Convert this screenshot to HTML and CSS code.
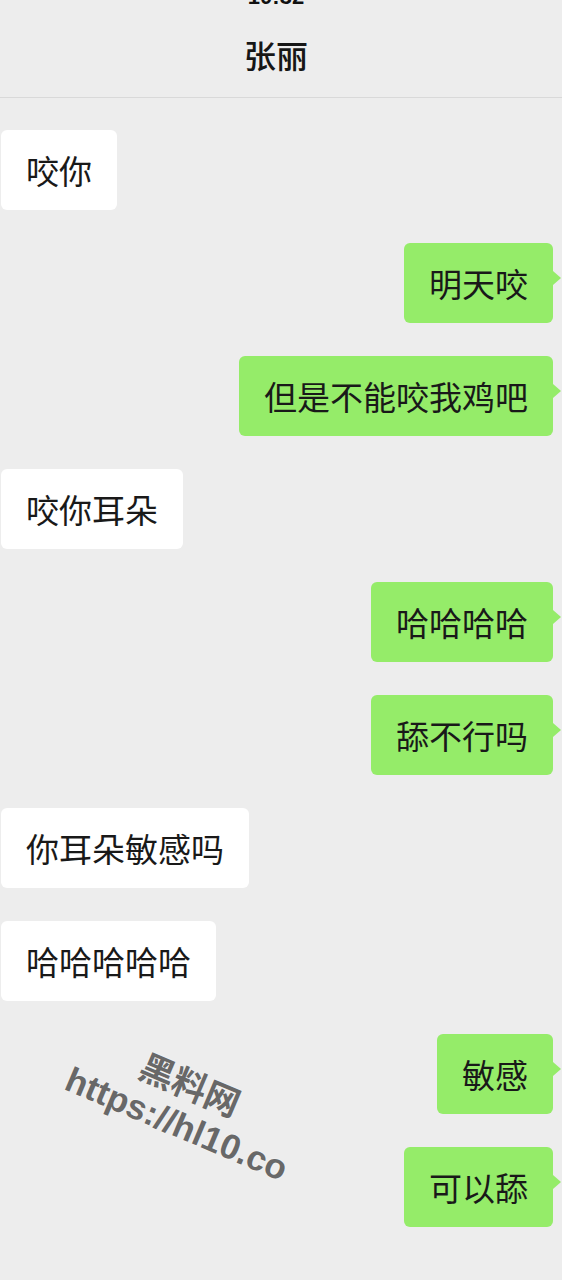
FILE: index.html
```html
<!DOCTYPE html>
<html lang="zh-CN">
<head>
  <meta charset="UTF-8" />
  <meta name="viewport" content="width=device-width, initial-scale=1.0"/>
  <title>张丽</title>
  <link rel="stylesheet" href="styles.css">
</head>
<body>

<div class="topbar">
  <div class="clock">10:32</div>
  <div class="title">张丽</div>
</div>

<div class="chat">
  <div class="msg"><div class="bubble">咬你</div></div>
  <div class="msg me"><div class="bubble">明天咬</div></div>
  <div class="msg me"><div class="bubble">但是不能咬我鸡吧</div></div>
  <div class="msg"><div class="bubble">咬你耳朵</div></div>
  <div class="msg me"><div class="bubble">哈哈哈哈</div></div>
  <div class="msg me"><div class="bubble">舔不行吗</div></div>
  <div class="msg"><div class="bubble">你耳朵敏感吗</div></div>
  <div class="msg"><div class="bubble">哈哈哈哈哈</div></div>
  <div class="msg me"><div class="bubble">敏感</div></div>
  <div class="msg me"><div class="bubble">可以舔</div></div>
</div>

<div class="mark mark-name">黑料网</div>
<div class="mark mark-url">https://hl10.co</div>

</body>
</html>
```

FILE: styles.css
```css
body {
  margin: 0;
  background-color: #ededed;
  font-family: "Noto Sans CJK SC", "Noto Sans", sans-serif;
  color: #191919;
}

.topbar {
  height: 97px;
  padding-right: 10px;
  border-bottom: 1px solid #d9d9d9;
  overflow: hidden;
  text-align: center;
}

.clock {
  height: 22px;
  margin-top: -14px;
  font: bold 22px/22px "Liberation Sans", sans-serif;
  color: #111;
}

.title {
  margin-top: 26px;
  font-size: 32px;
  line-height: 40px;
  font-weight: 500;
  color: #161616;
}

.chat {
  display: flex;
  flex-direction: column;
  gap: 33px;
  padding: 32px 9px 40px 1px;
}

.msg {
  display: flex;
}

.msg.me {
  justify-content: flex-end;
}

.bubble {
  position: relative;
  height: 80px;
  padding: 0 25px;
  font-size: 33px;
  line-height: 80px;
  background-color: #fff;
  border-radius: 6px;
}

.me .bubble {
  background-color: #95ec69;
}

.me .bubble::after {
  content: "";
  position: absolute;
  right: -8px;
  top: 28px;
  border-left: 8px solid #95ec69;
  border-top: 7px solid transparent;
  border-bottom: 7px solid transparent;
}

.mark {
  position: absolute;
  font-family: "Liberation Sans", "Noto Sans CJK SC", sans-serif;
  font-weight: bold;
  color: #686868;
  white-space: nowrap;
  transform: rotate(23deg);
  transform-origin: center;
  text-shadow: 0 0 2px rgba(255, 255, 255, 0.7);
}

.mark-name {
  left: 137px;
  top: 1066px;
  font-size: 35px;
  line-height: 40px;
}

.mark-url {
  left: 58px;
  top: 1104px;
  font-size: 35px;
  line-height: 40px;
}
```
